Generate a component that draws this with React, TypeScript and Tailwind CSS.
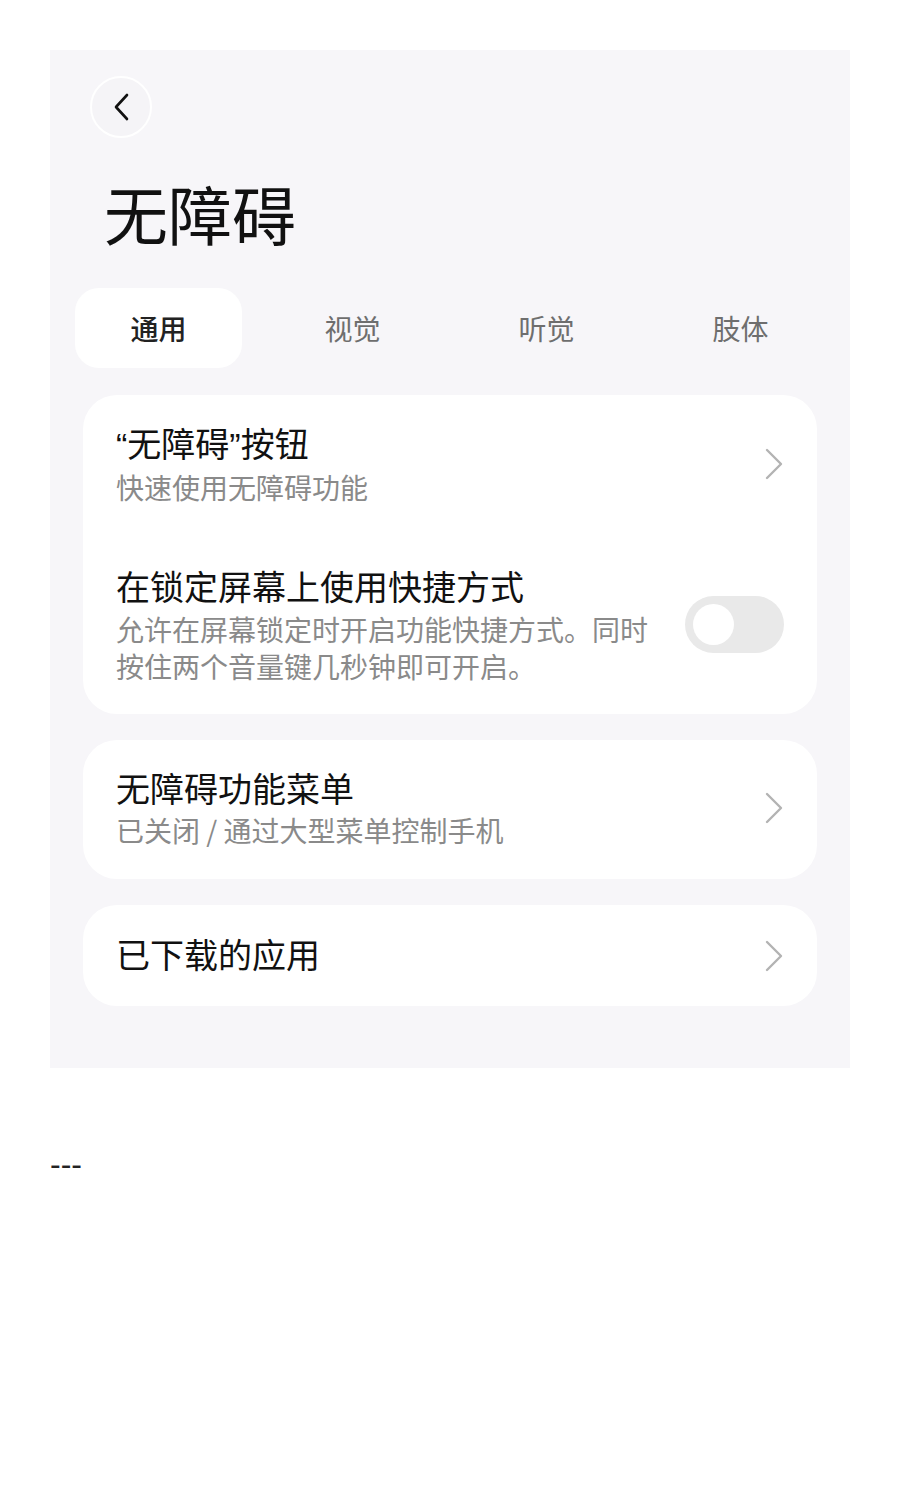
import React from "react"

const cjk = { fontFamily: '"Noto Sans CJK SC", "Noto Sans", sans-serif' }
const latin = { fontFamily: '"Liberation Sans", "Noto Sans CJK SC", sans-serif' }

function Chevron() {
  return (
    <svg width="20" height="32" viewBox="0 0 20 32" fill="none" className="shrink-0">
      <path d="M3 2 L17 16 L3 30" stroke="#b3b3b3" strokeWidth="2.4" strokeLinecap="round" strokeLinejoin="round" />
    </svg>
  )
}

function Toggle() {
  return (
    <div className="w-[99px] h-[57px] rounded-full bg-[#e9e9e9] flex items-center pl-[8px] shrink-0">
      <div className="w-[41px] h-[41px] rounded-full bg-white" />
    </div>
  )
}

const tabs = ["通用", "视觉", "听觉", "肢体"]

export default function App() {
  return (
    <div className="bg-white min-h-[1500px]" style={cjk}>
      <div className="pt-[50px] pl-[50px]">
        <div className="w-[800px] h-[1018px] bg-[#f7f6f9] flex flex-col pt-[26px]">
          <div className="ml-[40px] w-[62px] h-[62px] rounded-full bg-[#f5f4f7] border-2 border-white flex items-center justify-center">
            <svg width="20" height="30" viewBox="0 0 20 30" fill="none">
              <path d="M16 3 L5 15 L16 27" stroke="#111" strokeWidth="2.6" strokeLinecap="round" strokeLinejoin="round" />
            </svg>
          </div>
          <h1 className="mt-[38px] pl-[54px] text-[64px] leading-[72px] text-[#111] font-normal">无障碍</h1>
          <div className="flex gap-[27px] pl-[25px] mt-[40px]">
            {tabs.map((t, i) => (
              <div
                key={t}
                className={
                  i === 0
                    ? "w-[167px] h-[80px] rounded-[24px] bg-white flex items-center justify-center text-[28px] font-medium text-[#222]"
                    : "w-[167px] h-[80px] flex items-center justify-center text-[28px] text-[#6e6e6e]"
                }
              >
                {t}
              </div>
            ))}
          </div>

          <div className="flex flex-col gap-[26px] px-[33px] mt-[27px]">
            <div className="bg-white rounded-[34px] px-[33px] pt-[26px] pb-[29px] flex flex-col gap-[57px]">
              <div className="flex items-center justify-between">
                <div>
                  <div className="text-[34px] leading-[44px] text-[#111]">
                    <span style={latin}>“</span>无障碍<span style={latin}>”</span>按钮
                  </div>
                  <div className="text-[28px] leading-[40px] text-[#8a8a8a]">快速使用无障碍功能</div>
                </div>
                <Chevron />
              </div>
              <div className="flex items-center justify-between">
                <div className="w-[545px]">
                  <div className="text-[34px] leading-[44px] text-[#111]">在锁定屏幕上使用快捷方式</div>
                  <div className="text-[28px] leading-[37px] text-[#8a8a8a] mt-[3px]">
                    允许在屏幕锁定时开启功能快捷方式。同时按住两个音量键几秒钟即可开启。
                  </div>
                </div>
                <Toggle />
              </div>
            </div>

            <div className="bg-white rounded-[34px] px-[33px] pt-[26px] pb-[29px] flex items-center justify-between">
              <div>
                <div className="text-[34px] leading-[44px] text-[#111]">无障碍功能菜单</div>
                <div className="text-[28px] leading-[40px] text-[#8a8a8a]">已关闭 / 通过大型菜单控制手机</div>
              </div>
              <Chevron />
            </div>

            <div className="bg-white rounded-[34px] px-[33px] h-[101px] flex items-center justify-between">
              <div className="text-[34px] leading-[44px] text-[#111] -translate-y-[2px]">已下载的应用</div>
              <Chevron />
            </div>
          </div>
        </div>
      </div>
      <div className="pl-[50px] mt-[76px] text-[32px] leading-[40px] text-[#222]" style={{ fontFamily: '"Liberation Sans", sans-serif' }}>
        ---
      </div>
    </div>
  )
}
